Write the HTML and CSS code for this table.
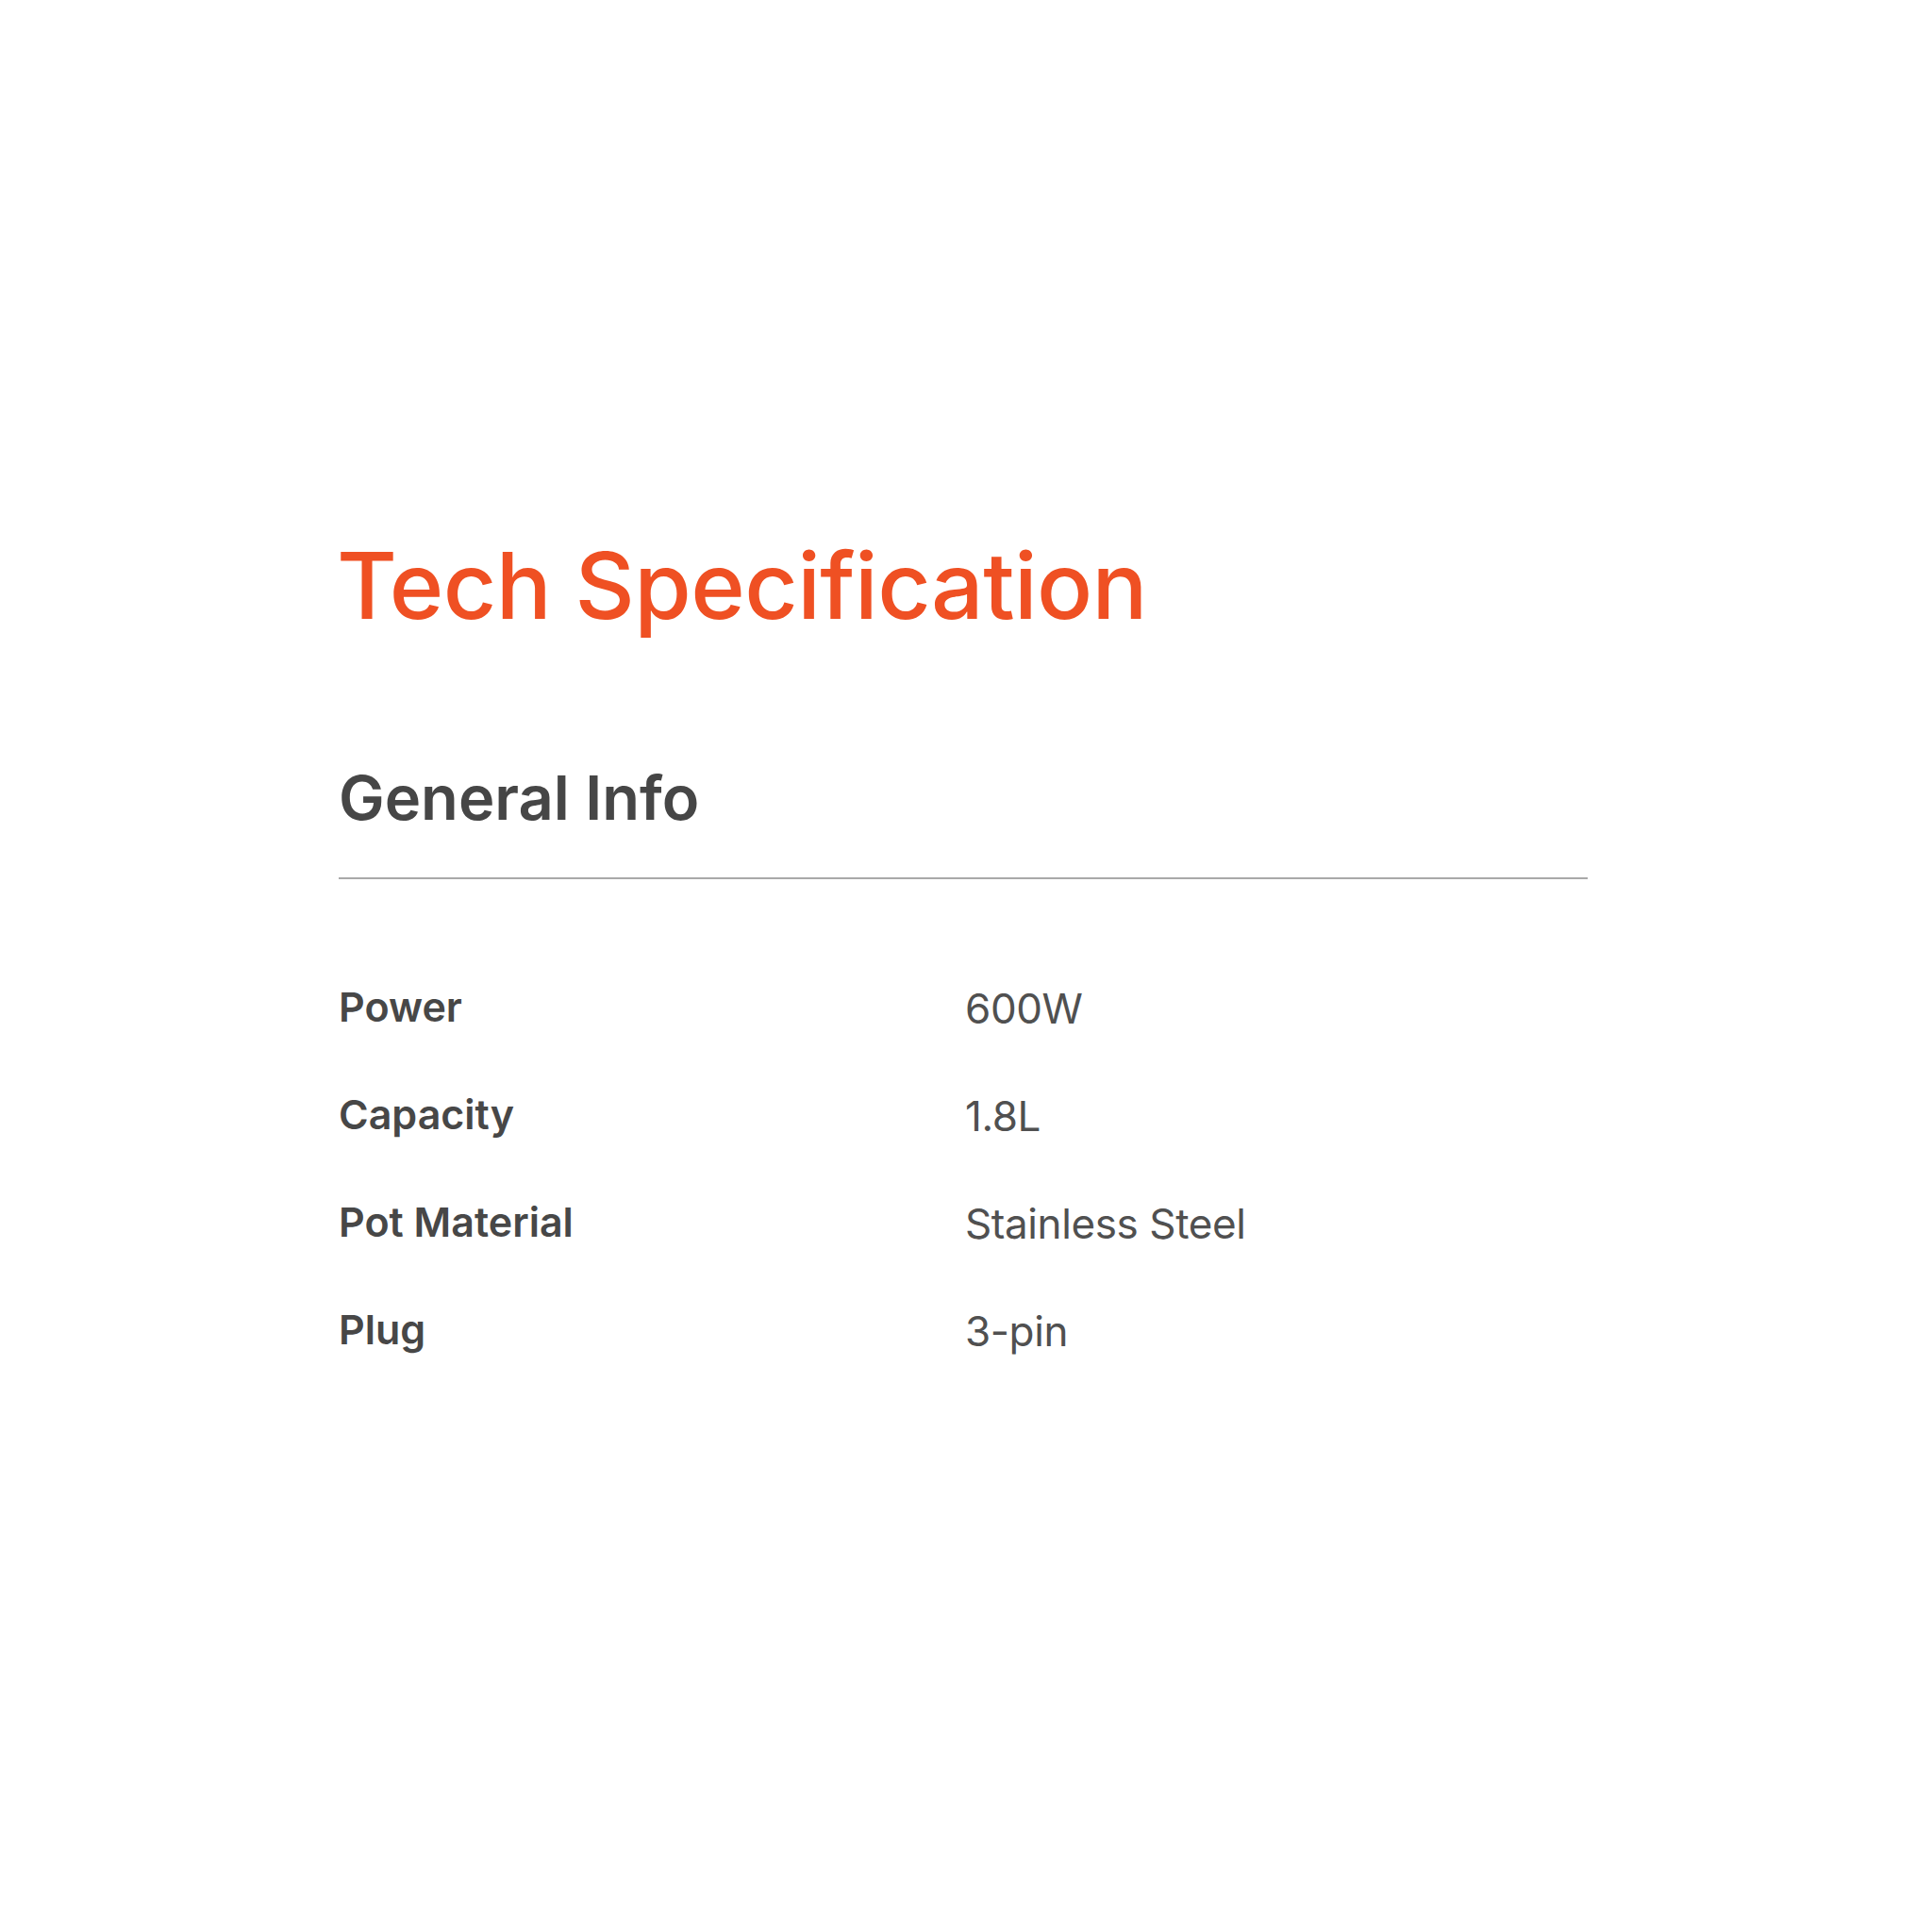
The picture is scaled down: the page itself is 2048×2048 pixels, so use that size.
FILE: index.html
```html
<!DOCTYPE html>
<html lang="en">
<head>
<meta charset="utf-8">
<title>Tech Specification</title>
<link rel="stylesheet" href="styles.css">
</head>
<body>
<main class="page">
  <section class="spec">
    <h1 class="spec-title">Tech Specification</h1>
    <h2 class="spec-section">General Info</h2>
    <dl class="spec-list">
      <div class="spec-row"><dt class="spec-label">Power</dt><dd class="spec-value">600W</dd></div>
      <div class="spec-row"><dt class="spec-label">Capacity</dt><dd class="spec-value">1.8L</dd></div>
      <div class="spec-row"><dt class="spec-label">Pot Material</dt><dd class="spec-value">Stainless Steel</dd></div>
      <div class="spec-row"><dt class="spec-label">Plug</dt><dd class="spec-value">3-pin</dd></div>
    </dl>
  </section>
</main>
</body>
</html>
```

FILE: styles.css
```css
html, body {
  margin: 0;
  padding: 0;
  background: #ffffff;
}

body {
  font-family: Inter, "Noto Sans", "Liberation Sans", sans-serif;
  width: 2048px;
  height: 2048px;
}

.page {
  padding: 572px 0 0 359px;
}

.spec {
  width: 1324px;
}

.spec-title {
  margin: 0 0 0 -2px;
  font-size: 98px;
  line-height: 98px;
  font-weight: 500;
  color: #ef5023;
  letter-spacing: -0.6px;
}

.spec-section {
  margin: 143px 0 0 0;
  font-size: 65px;
  line-height: 65px;
  font-weight: 600;
  color: #464646;
  padding-bottom: 52px;
  border-bottom: 2px solid #a9a9a9;
}

.spec-list {
  margin: 78px 0 0 0;
  padding: 0;
}

.spec-row {
  display: grid;
  grid-template-columns: 664px 1fr;
  align-items: start;
  height: 114px;
}

.spec-label {
  margin: 0;
  font-size: 43px;
  line-height: 114px;
  font-weight: 600;
  color: #474747;
}

.spec-value {
  margin: 0;
  font-size: 44px;
  line-height: 119px;
  font-weight: 400;
  color: #505050;
  letter-spacing: -0.4px;
}
```
